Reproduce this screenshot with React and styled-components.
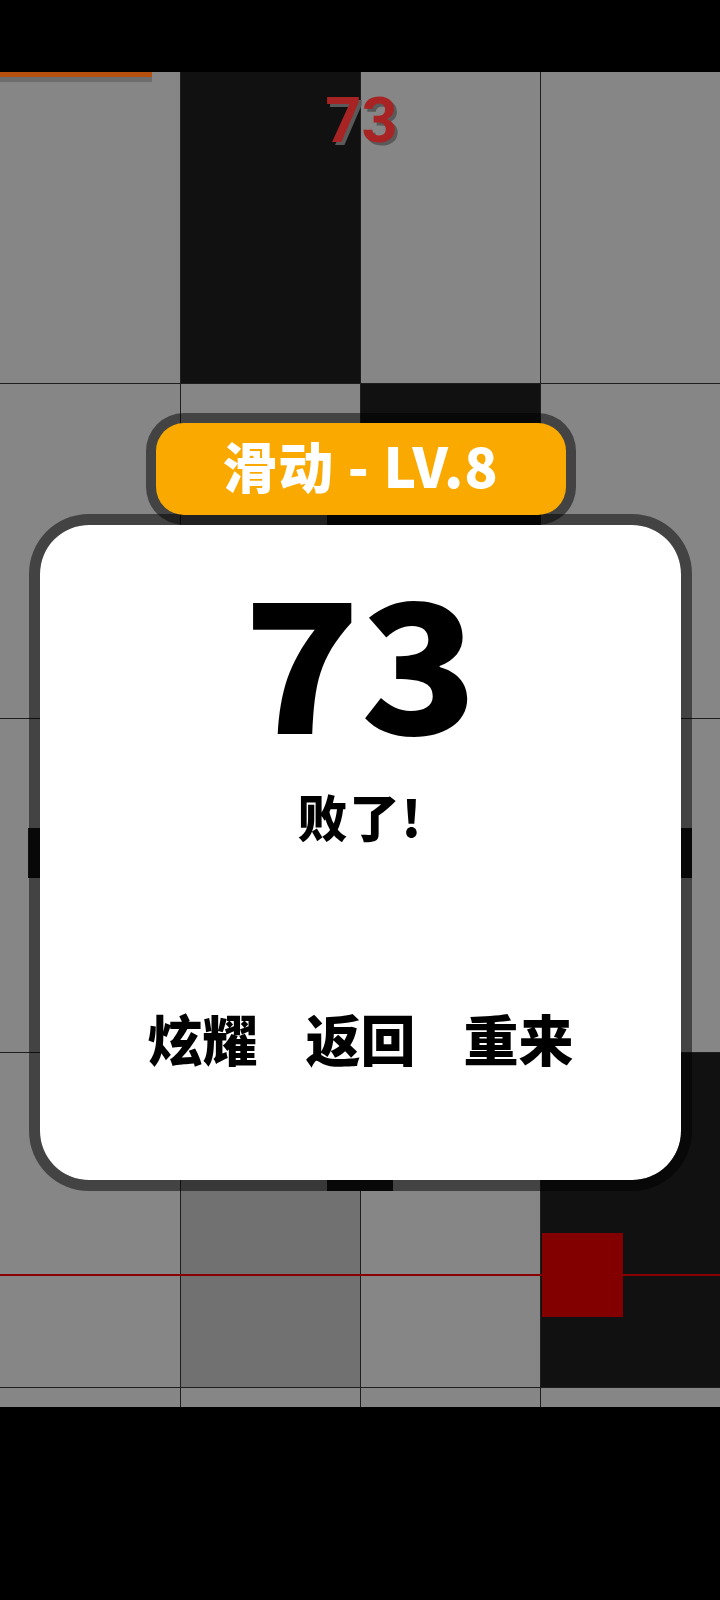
import React from 'react';
import styled, { createGlobalStyle } from 'styled-components';

const CJK = `"Noto Sans CJK SC", "Noto Sans", sans-serif`;

const GlobalStyle = createGlobalStyle`
  html, body {
    margin: 0;
    padding: 0;
    background: #000000;
  }
  * {
    box-sizing: border-box;
  }
`;

const Screen = styled.div`
  width: 720px;
  height: 1600px;
  display: flex;
  flex-direction: column;
  background: #000000;
  overflow: hidden;
`;

const StatusBar = styled.div`
  height: 72px;
  flex: none;
  background: #000000;
`;

// ==========================
// the game field, lanes and tiles
const Board = styled.div`
  position: relative;
  height: 1335px;
  flex: none;
  background: #868686;
  overflow: hidden;
`;

const Lanes = styled.div`
  display: grid;
  grid-template-columns: repeat(4, 180px);
  height: 100%;
`;

const Lane = styled.div`
  display: flex;
  flex-direction: column;
  margin-top: -22.5px;
  border-left: ${props => (props.first ? 'none' : '1px solid #1e1e1e')};
`;

const tileColors = {
  white: '#868686',
  black: '#111111',
  pressed: '#717171'
};

const Cell = styled.div`
  height: 334.5px;
  flex: none;
  background: ${props => tileColors[props.kind] || tileColors.white};
  border-bottom: 1px solid #1e1e1e;
`;

const Progress = styled.div`
  position: absolute;
  top: 0;
  left: 0;
  width: 152px;
  height: 5px;
  background: #b5500f;
  box-shadow: 0 5px 0 #6d6d6d;
`;

const TopScore = styled.div`
  position: absolute;
  top: 17px;
  left: 0;
  right: 0;
  padding-left: 3px;
  text-align: center;
  font-family: Roboto, "Liberation Sans", sans-serif;
  font-weight: 700;
  font-size: 63px;
  line-height: 1;
  color: #a82424;
  text-shadow: 3px 3px 0 #5a5a5a;
`;

const HitLine = styled.div`
  position: absolute;
  left: 0;
  right: 0;
  top: 1202px;
  height: 2px;
  background: #8a0000;
`;

const MissBlock = styled.div`
  position: absolute;
  left: 542px;
  top: 1161px;
  width: 81px;
  height: 84px;
  background: #830000;
`;

// slide tile lying under the dialog, only its edges show through the border
const SlideBar = styled.div`
  position: absolute;
  background: #111111;
  left: ${props => props.x}px;
  top: ${props => props.y}px;
  width: ${props => props.w}px;
  height: ${props => props.h}px;
`;

// ==========================
// result dialog
const Overlay = styled.div`
  position: absolute;
  inset: 0;
  display: flex;
  flex-direction: column;
  align-items: center;
  padding-top: 351px;
  padding-left: 1px;
`;

const LevelBanner = styled.div`
  position: relative;
  z-index: 2;
  width: 410px;
  height: 92px;
  border-radius: 28px;
  background: #f9a900;
  box-shadow: 0 0 0 10px rgba(0, 0, 0, 0.5);
  display: flex;
  align-items: center;
  justify-content: center;
  padding-bottom: 10px;
  color: #ffffff;
  font-family: ${CJK};
  font-weight: 900;
  font-size: 55px;
  letter-spacing: 1px;
`;

const Card = styled.div`
  position: relative;
  z-index: 1;
  margin-top: -1px;
  width: 663px;
  height: 677px;
  border: 11px solid rgba(0, 0, 0, 0.5);
  border-radius: 60px;
  background: #ffffff;
  background-clip: padding-box;
  display: flex;
  flex-direction: column;
  align-items: center;
  font-family: ${CJK};
  color: #000000;
`;

const Score = styled.div`
  margin-top: 41px;
  font-weight: 900;
  font-size: 180px;
  line-height: 1;
  transform: scaleX(1.07);
`;

const Verdict = styled.div`
  margin-top: 44px;
  font-weight: 900;
  font-size: 50px;
  line-height: 1;
  letter-spacing: 2px;
`;

const Actions = styled.div`
  margin-top: 170px;
  display: flex;
  gap: 48px;
`;

const ActionButton = styled.button`
  border: none;
  background: none;
  padding: 0;
  cursor: pointer;
  font-family: ${CJK};
  font-weight: 900;
  font-size: 55px;
  line-height: 1;
  color: #000000;
`;

const lanes = [
  ['white', 'white', 'white', 'white', 'white'],
  ['black', 'white', 'white', 'pressed', 'white'],
  ['white', 'black', 'white', 'white', 'white'],
  ['white', 'white', 'white', 'black', 'white']
];

export default function App() {
  return (
    <Screen>
      <GlobalStyle />
      <StatusBar />
      <Board>
        <Lanes>
          {lanes.map((cells, i) => (
            <Lane key={i} first={i === 0}>
              {cells.map((kind, j) => (
                <Cell key={j} kind={kind} />
              ))}
            </Lane>
          ))}
        </Lanes>

        <SlideBar x={327} y={433} w={66} h={686} />
        <SlideBar x={28} y={756} w={664} h={50} />

        <HitLine />
        <MissBlock />
        <Progress />
        <TopScore>73</TopScore>

        <Overlay>
          <LevelBanner>滑动 - LV.8</LevelBanner>
          <Card>
            <Score>73</Score>
            <Verdict>败了!</Verdict>
            <Actions>
              <ActionButton>炫耀</ActionButton>
              <ActionButton>返回</ActionButton>
              <ActionButton>重来</ActionButton>
            </Actions>
          </Card>
        </Overlay>
      </Board>
    </Screen>
  );
}
